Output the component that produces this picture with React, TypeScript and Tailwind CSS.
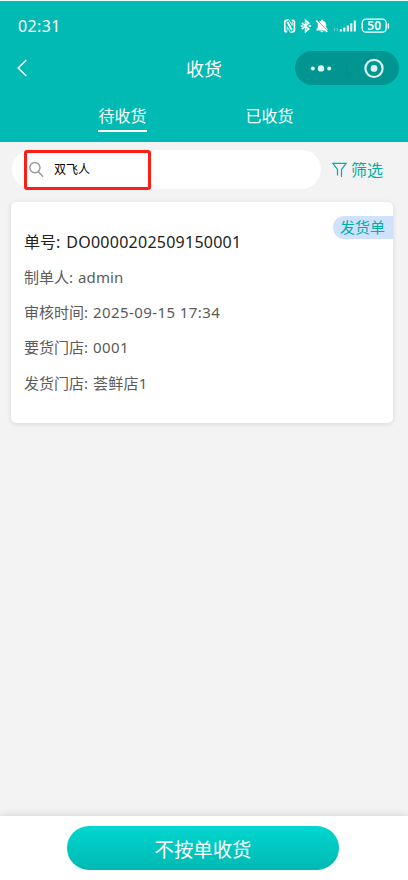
import { useState } from "react";

const tabs = ["待收货", "已收货"];

const rows = [
  { label: "制单人", value: "admin", tracking: "tracking-[0.1px]" },
  { label: "审核时间", value: "2025-09-15 17:34", tracking: "tracking-[0.42px]" },
  { label: "要货门店", value: "0001", tracking: "tracking-[0.4px]" },
  { label: "发货门店", value: "荟鲜店1", tracking: "tracking-[0.2px]" },
];

function StatusIcons() {
  return (
    <svg width="108" height="18" viewBox="0 0 108 18" fill="none" className="text-white">
      {/* nfc */}
      <path d="M4.6 3.3H3.4Q1.8 3.3 1.8 5V13Q1.8 14.7 3.4 14.7H4.2M8.8 3.3H9.8Q11.4 3.3 11.4 5V13Q11.4 14.7 9.8 14.7H8.6" stroke="currentColor" strokeWidth="1.7" />
      <path d="M4 2.6H5.8L9.2 8.4V4.6M9.2 15.4H7.4L4.2 9.8V13.4" stroke="currentColor" strokeWidth="0.9" />
      <path d="M4.4 5L8.8 13" stroke="currentColor" strokeWidth="1.8" />
      {/* bluetooth */}
      <path d="M18.8 5.8L25.8 11.9L22.6 14.6V3.4L25.8 6.1L18.8 12.2" stroke="currentColor" strokeWidth="1.6" />
      <path d="M17.8 8.1h2v1.8h-2zM25.8 8.1h2v1.8h-2z" fill="currentColor" />
      {/* muted bell */}
      <path d="M33.4 13.4V12.2L34.8 10.6V7.2Q35.2 4.4 38 3.7V3.1Q39 2 40 3.1V3.7Q42.8 4.4 43.2 7.3V10.6L44.6 12.2V13.4ZM37.2 14H40.8Q39 16.4 37.2 14Z" fill="currentColor" />
      <path d="M34.4 3.4L45.1 14.5" stroke="#00bab3" strokeWidth="1" />
      <path d="M33.2 3.6L44.2 15" stroke="currentColor" strokeWidth="1.6" />
      {/* signal */}
      <path d="M51.6 10.8v3.4M54.2 10.8v3.4" stroke="currentColor" strokeWidth="1" opacity="0.4" />
      <path d="M57.8 12V14.6M61.3 10.6V14.6M64.8 8.6V14.6M68.3 6.2V14.6M71.8 3.4V14.6" stroke="currentColor" strokeWidth="2" />
      {/* battery */}
      <rect x="79.2" y="2.2" width="24" height="13" rx="3.8" stroke="currentColor" strokeWidth="1.3" />
      <path d="M105.4 7V11" stroke="currentColor" strokeWidth="1.4" strokeLinecap="round" />
      <text x="91.2" y="13" textAnchor="middle" fontSize="12" fontWeight="600" fill="currentColor">50</text>
    </svg>
  );
}

function Header({ active, onChange }: { active: number; onChange: (i: number) => void }) {
  return (
    <header className="h-[142px] border-t border-[#eafaf9] bg-[#00bab3] text-white">
      <div className="flex h-[50px] items-center justify-between pl-[18px] pr-[17px]">
        <span className="text-[16px] tracking-[0.4px]">02:31</span>
        <StatusIcons />
      </div>
      <div className="grid h-[34px] grid-cols-3 items-center">
        <button aria-label="返回" className="pl-[17px]">
          <svg width="11" height="18" viewBox="0 0 11 18" fill="none" stroke="currentColor" strokeWidth="1.5">
            <path d="M9.3 1L1.2 9L9.3 17" />
          </svg>
        </button>
        <h1 className="pt-[2px] text-center text-[18px]">收货</h1>
        <div className="mr-[9px] flex h-[34px] w-[104px] items-center justify-self-end rounded-full bg-[#009591]">
          <svg width="104" height="34" viewBox="0 0 104 34" fill="#d9f3f2">
            <circle cx="17.8" cy="17.4" r="2" />
            <circle cx="26" cy="17.4" r="3.2" />
            <circle cx="34.2" cy="17.4" r="2" />
            <path d="M52 11V24" stroke="#008985" strokeWidth="0.7" />
            <circle cx="79" cy="17.4" r="8.6" fill="none" stroke="#d9f3f2" strokeWidth="2.2" />
            <circle cx="79" cy="17.4" r="3.4" />
          </svg>
        </div>
      </div>
      <nav className="flex justify-center gap-[98px] pt-[18px] pr-[16px]">
        {tabs.map((tab, i) => (
          <button
            key={tab}
            onClick={() => onChange(i)}
            className={
              i === active
                ? "h-[29px] w-[49px] border-b-2 border-white text-[16px] leading-[27px] whitespace-nowrap"
                : "h-[29px] w-[49px] pb-[2px] text-[16px] leading-[27px] whitespace-nowrap"
            }
          >
            {tab}
          </button>
        ))}
      </nav>
    </header>
  );
}

export default function App() {
  const [active, setActive] = useState(0);
  const [keyword, setKeyword] = useState("双飞人");

  return (
    <div className="flex h-[880px] w-[408px] flex-col overflow-hidden bg-[#f3f3f3] font-['Noto_Sans','Noto_Sans_CJK_SC',sans-serif]">
      <Header active={active} onChange={setActive} />

      <div className="flex items-center pt-2 pl-3">
        <div className="flex h-[39px] w-[309px] items-center rounded-full bg-white pl-[12px]">
          <label className="flex h-[40px] w-[127px] items-center rounded-[3px] border-3 border-[#ff1e14] pl-[2px]">
            <svg width="15" height="17" viewBox="0 0 15 17" fill="none" stroke="#999999" strokeWidth="1.4">
              <circle cx="5.9" cy="6.6" r="5.1" />
              <path d="M9.4 10.7L14 15.8" />
            </svg>
            <input
              value={keyword}
              onChange={(e) => setKeyword(e.target.value)}
              className="ml-[10px] w-[80px] text-[12px] text-black outline-none"
            />
          </label>
        </div>
        <button className="ml-[11px] flex items-center gap-[4px] text-[16px] text-[#00aea5]">
          <svg width="15" height="16" viewBox="0 0 15 16" fill="none" stroke="currentColor" strokeWidth="1.2">
            <path d="M5.5 13.5V7.5L0.9 1.4H14.1L9.5 7.5V15" />
          </svg>
          筛选
        </button>
      </div>

      <main className="flex-1 px-[11px] pt-[13px]">
        <section className="relative h-[221px] w-[382px] rounded-[5px] bg-white px-[13px] pt-[27px] shadow-[0_1px_5px_rgba(0,0,0,0.12)]">
          <span className="absolute top-[14px] right-0 h-[23px] w-[60px] rounded-l-full bg-[#d0e2fb] pl-[7px] text-[15px] leading-[23px] text-[#00aea5]">
            发货单
          </span>
          <h2 className="h-[35px] text-[16px] leading-[26px] text-[#222222]">
            单号:<span className="ml-[6px] tracking-[0.25px]">DO0000202509150001</span>
          </h2>
          {rows.map((row) => (
            <p key={row.label} className="h-[35.2px] text-[15px] leading-[26px] text-[#5b5b5b]">
              {row.label}:<span className={`ml-[5px] ${row.tracking}`}>{row.value}</span>
            </p>
          ))}
        </section>
      </main>

      <footer className="flex h-[64px] justify-center bg-white pt-[10px] pr-[2px] shadow-[0_-1px_8px_rgba(0,0,0,0.13)]">
        <button className="h-[44px] w-[272px] rounded-full bg-linear-to-b from-[#02d6d0] to-[#00b9b2] pt-[3px] text-[19.4px] text-white">
          不按单收货
        </button>
      </footer>
    </div>
  );
}
